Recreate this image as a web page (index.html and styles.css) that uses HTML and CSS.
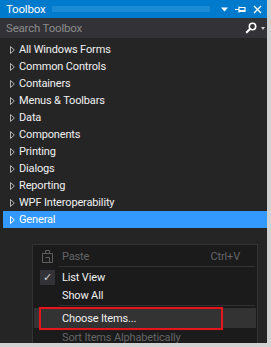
FILE: index.html
```html
<!DOCTYPE html>
<html lang="en">
<head>
  <meta charset="UTF-8" />
  <title>Toolbox</title>
  <link rel="stylesheet" href="styles.css">
</head>
<body>
  <div class="toolbox">
    <div class="title-bar">
      <span class="title">Toolbox</span>
      <span class="grip"></span>
      <svg class="tb-icon" width="7" height="5" viewBox="0 0 7 5"><path d="M0 0.5h7L3.5 4.5z" fill="#fff"/></svg>
      <svg class="tb-icon" width="11" height="9" viewBox="0 0 11 9"><path d="M0 4.5h4M4 1.5v6M4 2.5h6v4H4M4 5.5h6" stroke="#fff" stroke-width="1.2" fill="none"/></svg>
      <svg class="tb-icon" width="9" height="9" viewBox="0 0 9 9"><path d="M1 1l7 7M8 1L1 8" stroke="#fff" stroke-width="1.4"/></svg>
    </div>

    <div class="search">
      <span class="placeholder">Search Toolbox</span>
      <svg width="12" height="12" viewBox="0 0 12 12"><circle cx="7.5" cy="4.5" r="3.2" stroke="#fff" stroke-width="1.6" fill="none"/><path d="M5.2 6.8L1.2 10.8" stroke="#fff" stroke-width="2"/></svg>
      <svg class="search-drop" width="4" height="3" viewBox="0 0 4 3"><path d="M0 0h4L2 3z" fill="#ccc"/></svg>
    </div>

    <ul class="tab-list">
      <li><svg class="arrow" width="5" height="8" viewBox="0 0 5 8"><path d="M0.5 0.5L4.3 4L0.5 7.5z"/></svg>All Windows Forms</li>
      <li><svg class="arrow" width="5" height="8" viewBox="0 0 5 8"><path d="M0.5 0.5L4.3 4L0.5 7.5z"/></svg>Common Controls</li>
      <li><svg class="arrow" width="5" height="8" viewBox="0 0 5 8"><path d="M0.5 0.5L4.3 4L0.5 7.5z"/></svg>Containers</li>
      <li><svg class="arrow" width="5" height="8" viewBox="0 0 5 8"><path d="M0.5 0.5L4.3 4L0.5 7.5z"/></svg>Menus &amp; Toolbars</li>
      <li><svg class="arrow" width="5" height="8" viewBox="0 0 5 8"><path d="M0.5 0.5L4.3 4L0.5 7.5z"/></svg>Data</li>
      <li><svg class="arrow" width="5" height="8" viewBox="0 0 5 8"><path d="M0.5 0.5L4.3 4L0.5 7.5z"/></svg>Components</li>
      <li><svg class="arrow" width="5" height="8" viewBox="0 0 5 8"><path d="M0.5 0.5L4.3 4L0.5 7.5z"/></svg>Printing</li>
      <li><svg class="arrow" width="5" height="8" viewBox="0 0 5 8"><path d="M0.5 0.5L4.3 4L0.5 7.5z"/></svg>Dialogs</li>
      <li><svg class="arrow" width="5" height="8" viewBox="0 0 5 8"><path d="M0.5 0.5L4.3 4L0.5 7.5z"/></svg>Reporting</li>
      <li><svg class="arrow" width="5" height="8" viewBox="0 0 5 8"><path d="M0.5 0.5L4.3 4L0.5 7.5z"/></svg>WPF Interoperability</li>
      <li class="selected"><svg class="arrow" width="5" height="8" viewBox="0 0 5 8"><path d="M0.5 0.5L4.3 4L0.5 7.5z"/></svg>General</li>
    </ul>

    <div class="context-menu">
      <div class="menu-item disabled">
        <span class="menu-icon">
          <svg width="11" height="13" viewBox="0 0 11 13"><path d="M3.5 0.5h4v3h-4zM0.5 3.5h3M7.5 3.5h3v9h-10v-9M3.5 7.5h4v5" stroke="#5f5f5f" fill="none"/></svg>
        </span>
        <span class="menu-label">Paste</span>
        <span class="shortcut">Ctrl+V</span>
      </div>
      <div class="separator"></div>
      <div class="menu-item">
        <span class="menu-icon"><span class="check">&#10003;</span></span>
        <span class="menu-label">List View</span>
      </div>
      <div class="menu-item">
        <span class="menu-icon"></span>
        <span class="menu-label">Show All</span>
      </div>
      <div class="separator sep-wide"></div>
      <div class="menu-item hover">
        <span class="menu-icon"></span>
        <span class="menu-label">Choose Items...</span>
      </div>
      <div class="menu-item disabled">
        <span class="menu-icon"></span>
        <span class="menu-label">Sort Items Alphabetically</span>
      </div>
      <div class="annotation"></div>
    </div>
  </div>
</body>
</html>
```

FILE: styles.css
```css
* {
  box-sizing: border-box;
  margin: 0;
  padding: 0;
}

body {
  background: #d2d2d2;
  font-family: Roboto, 'Noto Sans', sans-serif;
  font-size: 11px;
  letter-spacing: -0.15px;
  color: #f1f1f1;
}

.toolbox {
  position: relative;
  width: 267px;
  height: 343px;
  background: #252526;
  overflow: hidden;
}

.title-bar {
  display: flex;
  align-items: center;
  height: 18px;
  padding: 0 5px 0 6px;
  background: #007acc;
  color: #fff;
}

.title {
  font-size: 11.5px;
  letter-spacing: -0.2px;
}

.grip {
  flex: 1;
  height: 6px;
  margin: 0 4px 0 7px;
  background-image: radial-gradient(circle, #4aa5e3 0.55px, transparent 0.8px);
  background-size: 2px 2px;
}

.tb-icon {
  margin-left: 7px;
}

.search {
  display: flex;
  align-items: center;
  height: 20px;
  padding: 0 2px 0 6px;
  background: #333337;
}

.search .placeholder {
  flex: 1;
  color: #8a8a8a;
  font-size: 11.5px;
  letter-spacing: -0.2px;
}

.search-drop {
  margin-left: 4px;
}

.tab-list {
  list-style: none;
  padding: 3px 0 0 3px;
}

.tab-list li {
  display: flex;
  align-items: center;
  height: 17px;
  padding-left: 7px;
}

.tab-list li.selected {
  background: #3399ff;
  color: #fff;
}

.arrow {
  margin-right: 4px;
  fill: none;
  stroke: #b4b4b4;
  stroke-width: 1;
}

.selected .arrow {
  stroke: #fff;
}

.context-menu {
  position: absolute;
  left: 32px;
  top: 244px;
  width: 226px;
  height: 110px;
  padding: 2px 1px 0;
  background: #1b1b1c;
  border: 1px solid #333337;
}

.menu-item {
  display: flex;
  align-items: center;
  height: 18px;
}

.menu-item.hover {
  height: 20px;
  background: #333334;
}

.menu-item.disabled {
  color: #656565;
}

.menu-icon {
  display: flex;
  align-items: center;
  justify-content: center;
  width: 26px;
  height: 100%;
}

.menu-label {
  flex: 1;
  padding-left: 2px;
}

.shortcut {
  padding-right: 16px;
}

.check {
  display: flex;
  align-items: center;
  justify-content: center;
  width: 15px;
  height: 15px;
  background: #333337;
  color: #d0d0d0;
  font-size: 11px;
}

.separator {
  height: 1px;
  margin: 1px 1px 1px 25px;
  background: #333337;
}

.sep-wide {
  margin-bottom: 2px;
}

.annotation {
  position: absolute;
  left: 6px;
  top: 62px;
  width: 184px;
  height: 23px;
  border: 2px solid #e8141b;
}
```
